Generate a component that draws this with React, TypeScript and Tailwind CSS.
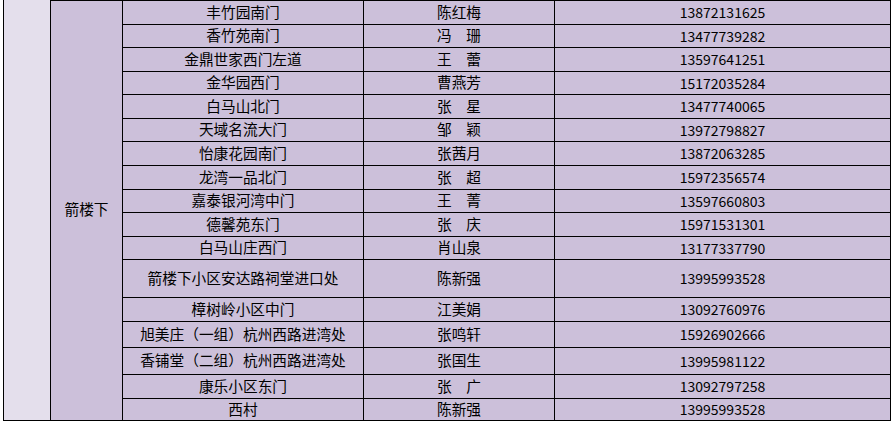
const rows: { place: string; name: string; phone: string; h: string }[] = [
  { place: "丰竹园南门", name: "陈红梅", phone: "13872131625", h: "h-[24px]" },
  { place: "香竹苑南门", name: "冯　珊", phone: "13477739282", h: "h-[23px]" },
  { place: "金鼎世家西门左道", name: "王　蕾", phone: "13597641251", h: "h-[24px]" },
  { place: "金华园西门", name: "曹燕芳", phone: "15172035284", h: "h-[23px]" },
  { place: "白马山北门", name: "张　星", phone: "13477740065", h: "h-[24px]" },
  { place: "天域名流大门", name: "邹　颖", phone: "13972798827", h: "h-[23px]" },
  { place: "怡康花园南门", name: "张茜月", phone: "13872063285", h: "h-[24px]" },
  { place: "龙湾一品北门", name: "张　超", phone: "15972356574", h: "h-[24px]" },
  { place: "嘉泰银河湾中门", name: "王　菁", phone: "13597660803", h: "h-[23px]" },
  { place: "德馨苑东门", name: "张　庆", phone: "15971531301", h: "h-[24px]" },
  { place: "白马山庄西门", name: "肖山泉", phone: "13177337790", h: "h-[23px]" },
  { place: "箭楼下小区安达路祠堂进口处", name: "陈新强", phone: "13995993528", h: "h-[38px]" },
  { place: "樟树岭小区中门", name: "江美娟", phone: "13092760976", h: "h-[24px]" },
  { place: "旭美庄（一组）杭州西路进湾处", name: "张鸣轩", phone: "15926902666", h: "h-[26px]" },
  { place: "香铺堂（二组）杭州西路进湾处", name: "张国生", phone: "13995981122", h: "h-[27px]" },
  { place: "康乐小区东门", name: "张　广", phone: "13092797258", h: "h-[24px]" },
  { place: "西村", name: "陈新强", phone: "13995993528", h: "h-[22px]" },
];

const cell = "flex items-center justify-center border-l border-black pb-[1px]";

export default function App() {
  return (
    <div
      className="w-[892px] h-[422px] bg-white pl-[3px] text-[14.7px] leading-none text-black"
      style={{ fontFamily: '"Noto Sans CJK SC", "Noto Sans", sans-serif' }}
    >
      <div className="flex h-[421px]">
        {/* outer grouping column */}
        <div className="w-[47px] shrink-0 border-l border-b border-black bg-[#e4dfec]" />

        {/* merged area cell */}
        <div className="w-[72px] shrink-0 flex items-center justify-center border-l border-t border-b border-black bg-[#ccc0da] pb-[2px]">
          箭楼下
        </div>

        {/* detail rows */}
        <div className="flex flex-col border-b border-black bg-[#ccc0da]">
          {rows.map((r, i) => (
            <div key={i} className={`flex border-t border-black ${r.h}`}>
              <div className={`${cell} w-[241px]`}>{r.place}</div>
              <div className={`${cell} w-[191px]`}>{r.name}</div>
              <div className={`${cell} w-[337px] border-r text-[14px]`}>{r.phone}</div>
            </div>
          ))}
        </div>
      </div>
    </div>
  );
}
